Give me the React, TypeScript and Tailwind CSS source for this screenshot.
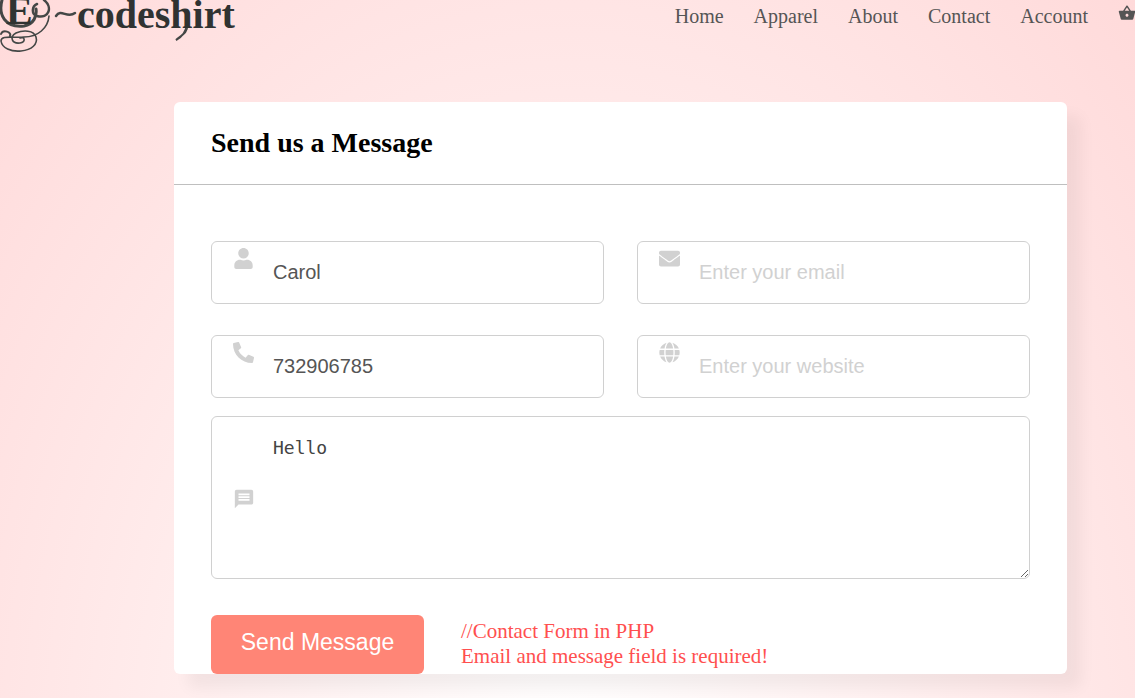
import type { ReactNode } from "react";
import { FaEnvelope, FaGlobe, FaPhoneAlt, FaUser } from "react-icons/fa";
import { MdMessage, MdShoppingBasket } from "react-icons/md";

const links = ["Home", "Apparel", "About", "Contact", "Account"];

function Logo() {
  return (
    <svg width="240" height="54" viewBox="0 0 240 54" role="img" aria-label="E-codeshirt" className="block">
      <g fill="none" stroke="#444746" strokeLinecap="round">
        <path d="M44 0C53 7 49 19 37 16C31 14 32 6 37 4" strokeWidth="2.5" />
        <path d="M49 16C48 28 38 37 24 37C12 38 1 35 1 41C2 48 11 52 21 51C32 50 38 44 36 37C34 30 23 30 16 33C9 37 12 44 20 43C26 42 25 36 20 38" strokeWidth="1.6" />
        <path d="M1 34C3 29 12 32 10 36" strokeWidth="2" />
        <path d="M56 16C61 8 67 19 75 13" strokeWidth="2.5" />
        <path d="M2 0C-2 15 5 28 24 26C34 24 37 16 36 9" strokeWidth="3" />
        <path d="M187 26C188 32 182 35 176 40C182 37 186 32 187 24" strokeWidth="2" />
      </g>
      <g fill="#303332" className="font-['Liberation_Serif',serif] font-bold">
        <text x="6" y="24" fontSize="40">E</text>
        <text x="77" y="28" fontSize="40">codeshirt</text>
      </g>
    </svg>
  );
}

type FieldProps = {
  name: string;
  label: string;
  type: string;
  icon: ReactNode;
  value?: string;
};

function Field({ name, label, type, icon, value }: FieldProps) {
  return (
    <div className="relative">
      <label htmlFor={name} aria-label={label} className="absolute left-[22px] top-[7px] text-[21px] text-[#d1d1d1]">
        {icon}
      </label>
      <input
        id={name}
        name={name}
        type={type}
        placeholder={label}
        defaultValue={value}
        className="block h-[63px] w-full rounded-md border border-[#d0d0d0] bg-white pr-5 pl-[61px] font-['Liberation_Sans',Arial,sans-serif] text-[20px] text-[#555] outline-none placeholder:text-[#d1d1d1]"
      />
    </div>
  );
}

export default function App() {
  return (
    <div className="min-h-screen overflow-hidden bg-[radial-gradient(ellipse_at_50%_110%,#ffffff_0%,#ffdada_100%)] pb-6 font-['Liberation_Serif','Times_New_Roman',serif]">
      <header className="flex items-start justify-between">
        <a href="#home">
          <Logo />
        </a>
        <nav className="-mr-px flex gap-[30px] pt-1 text-[20px] leading-6 text-[#555]">
          {links.map((link) => (
            <a key={link} href={`#${link.toLowerCase()}`}>
              {link}
            </a>
          ))}
          <a href="#cart" aria-label="Cart">
            <MdShoppingBasket size={18} />
          </a>
        </nav>
      </header>

      <main className="mt-12 mr-[68px] ml-[174px] rounded-md bg-white shadow-[14px_14px_15px_rgba(0,0,0,0.05)]">
        <h1 className="border-b border-[#bfbfbf] px-[37px] py-[25px] text-[28px] leading-8 font-bold text-black">
          Send us a Message
        </h1>
        <form className="px-[37px] pt-14" onSubmit={(event) => event.preventDefault()}>
          <div className="grid grid-cols-2 gap-x-[33px] gap-y-[31px]">
            <Field name="name" label="Enter your name" type="text" icon={<FaUser />} value="Carol" />
            <Field name="email" label="Enter your email" type="email" icon={<FaEnvelope />} />
            <Field name="phone" label="Enter your phone" type="tel" icon={<FaPhoneAlt />} value="732906785" />
            <Field name="website" label="Enter your website" type="text" icon={<FaGlobe />} />
          </div>
          <div className="relative mt-[18px]">
            <label htmlFor="message" aria-label="Message" className="absolute top-[72px] left-[22px] text-[22px] text-[#d1d1d1]">
              <MdMessage />
            </label>
            <textarea
              id="message"
              name="message"
              defaultValue="Hello"
              className="block h-[163px] w-full rounded-md border border-[#d0d0d0] bg-white pt-5 pr-5 pl-[61px] font-['DejaVu_Sans_Mono',monospace] text-[18px] leading-[22px] text-[#444] outline-none"
            />
          </div>
          <div className="mt-9 flex items-start gap-[37px]">
            <button
              type="submit"
              className="h-[59px] w-[213px] rounded-md bg-[#ff8576] pb-1 font-['Liberation_Sans',Arial,sans-serif] text-[23px] text-white"
            >
              Send Message
            </button>
            <p className="pt-1 text-[21px] leading-[25px] text-[#ff4f4f]">
              //Contact Form in PHP
              <br />
              Email and message field is required!
            </p>
          </div>
        </form>
      </main>
    </div>
  );
}
